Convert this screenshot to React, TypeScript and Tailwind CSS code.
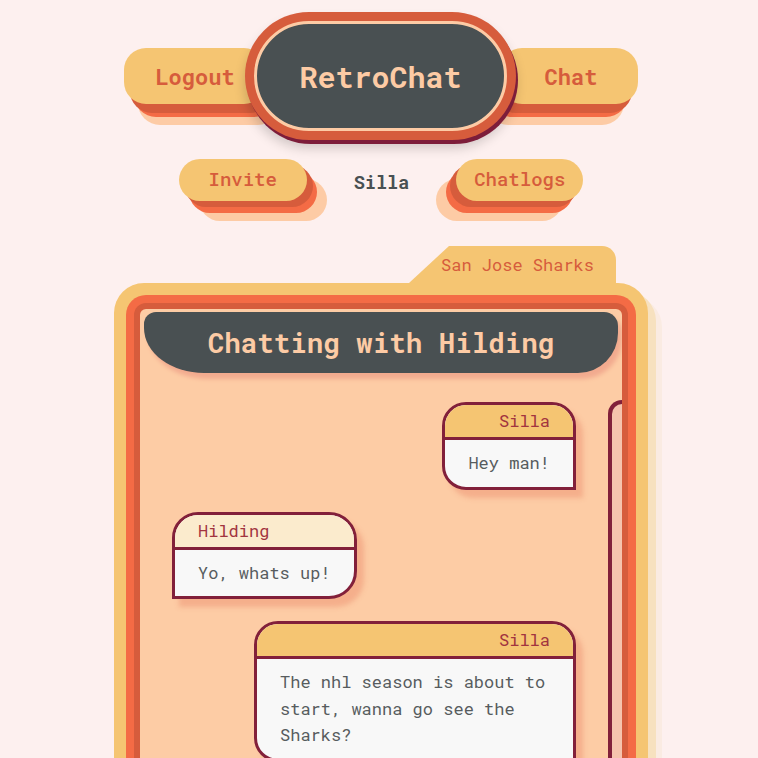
const mono = "font-['Roboto_Mono','DejaVu_Sans_Mono',monospace]";

type Msg = { from: string; text: string; mine: boolean };

const messages: Msg[] = [
  { from: 'Silla', text: 'Hey man!', mine: true },
  { from: 'Hilding', text: 'Yo, whats up!', mine: false },
  { from: 'Silla', text: 'The nhl season is about to start, wanna go see the Sharks?', mine: true },
];

function Bubble({ msg }: { msg: Msg }) {
  return (
    <div
      className={
        'max-w-[322px] overflow-hidden border-[3px] border-[#82203a] bg-[#f8f8f8] shadow-[7px_8px_5px_rgba(236,140,108,0.45)] ' +
        (msg.mine
          ? 'self-end rounded-tl-[24px] rounded-tr-[24px] rounded-bl-[24px]'
          : 'self-start rounded-tl-[26px] rounded-tr-[28px] rounded-br-[28px]')
      }
    >
      <div
        className={
          'flex h-[35px] items-center border-b-[3px] border-[#82203a] px-[23px] text-[17px] text-[#a2343f] ' +
          (msg.mine ? 'justify-end bg-[#f5c572]' : 'justify-start bg-[#fbebcd]')
        }
      >
        {msg.from}
      </div>
      <div className="px-[23px] pt-[10px] pb-[10px] text-[17px] leading-[26.5px] text-[#575c5e]">{msg.text}</div>
    </div>
  );
}

export default function App() {
  return (
    <div className={`min-h-screen bg-[#fdf0ef] pl-[4px] pb-10 ${mono}`}>
      <div className="flex flex-col items-center">
        {/* top nav */}
        <div className="mt-[12px] flex items-center">
          <button className="-mr-[21px] h-[56px] w-[142px] rounded-[22px] bg-[#f5c572] text-[22px] font-bold text-[#d65c3c] shadow-[6px_9px_0_#d65c3c,10px_13px_0_#f46b45,14px_21px_0_#fdcba5]">
            Logout
          </button>
          <div className="relative z-10 h-[128px] w-[271px] rounded-full bg-[#d65c3c] p-[9px] shadow-[2px_4px_0_#7d1d3a,0_8px_12px_rgba(0,0,0,0.18)]">
            <div className="flex h-full w-full items-center justify-center rounded-full border-[3px] border-[#fdcba5] bg-[#495052] text-[30px] font-bold text-[#fdcba5]">
              RetroChat
            </div>
          </div>
          <button className="-ml-[16px] h-[56px] w-[138px] rounded-[22px] bg-[#f5c572] text-[22px] font-bold text-[#d65c3c] shadow-[-6px_9px_0_#d65c3c,-10px_13px_0_#f46b45,-14px_21px_0_#fdcba5]">
            <span className="pl-[4px]">Chat</span>
          </button>
        </div>

        {/* sub nav */}
        <div className="mt-[19px] flex items-center gap-[47px]">
          <button className="h-[42px] w-[128px] rounded-full bg-[#f5c572] pb-[2px] text-[19px] font-medium text-[#d65c3c] shadow-[6px_6px_0_#d65c3c,10px_12px_0_#f46b45,20px_20px_0_#fdcba5]">
            Invite
          </button>
          <span className="pt-[5px] text-[18.5px] font-bold text-[#495052]">Silla</span>
          <button className="h-[42px] w-[127px] rounded-full bg-[#f5c572] pb-[2px] text-[19px] font-medium text-[#d65c3c] shadow-[-6px_6px_0_#d65c3c,-10px_12px_0_#f46b45,-20px_20px_0_#fdcba5]">
            Chatlogs
          </button>
        </div>

        {/* chat panel */}
        <div className="mt-[45px] flex w-[534px] flex-col items-end">
          <div className="mr-[32px] flex h-[37px] w-[207px] items-center rounded-tr-[14px] bg-[#f5c572] pl-[32px] text-[17px] text-[#d65c3c] [clip-path:polygon(40px_0,100%_0,100%_100%,0_100%)]">
            San Jose Sharks
          </div>
          <div className="w-full rounded-[30px] bg-[#f5c572] p-[12px] shadow-[8px_8px_0_#f7e1bf,14px_14px_0_#faebe2]">
            <div className="rounded-[20px] bg-[#f46b45] p-[8px]">
              <div className="rounded-[12px] bg-[#d65c3c] p-[6px]">
                <div className="overflow-hidden rounded-[6px] bg-[#fdcca5] pt-[3px] pb-10">
                  <div className="mx-[4px] flex h-[61px] items-center justify-center rounded-[12px_14px_40px_60px/12px_14px_40px_45px] bg-[#495052] text-[27.5px] font-bold text-[#fdcba5] shadow-[4px_6px_4px_#f2ab8f]">
                    Chatting with Hilding
                  </div>
                  <div className="mt-[27px] flex">
                    <div className="flex flex-1 flex-col gap-[22px] pl-[32px] pr-[32px] pt-[2px]">
                      {messages.map((m, i) => (
                        <Bubble key={i} msg={m} />
                      ))}
                    </div>
                    <div className="w-[14px] self-stretch rounded-tl-[14px] border-l-4 border-t-4 border-[#82203a] bg-[#f6c3ad]" />
                  </div>
                </div>
              </div>
            </div>
          </div>
        </div>
      </div>
    </div>
  );
}
